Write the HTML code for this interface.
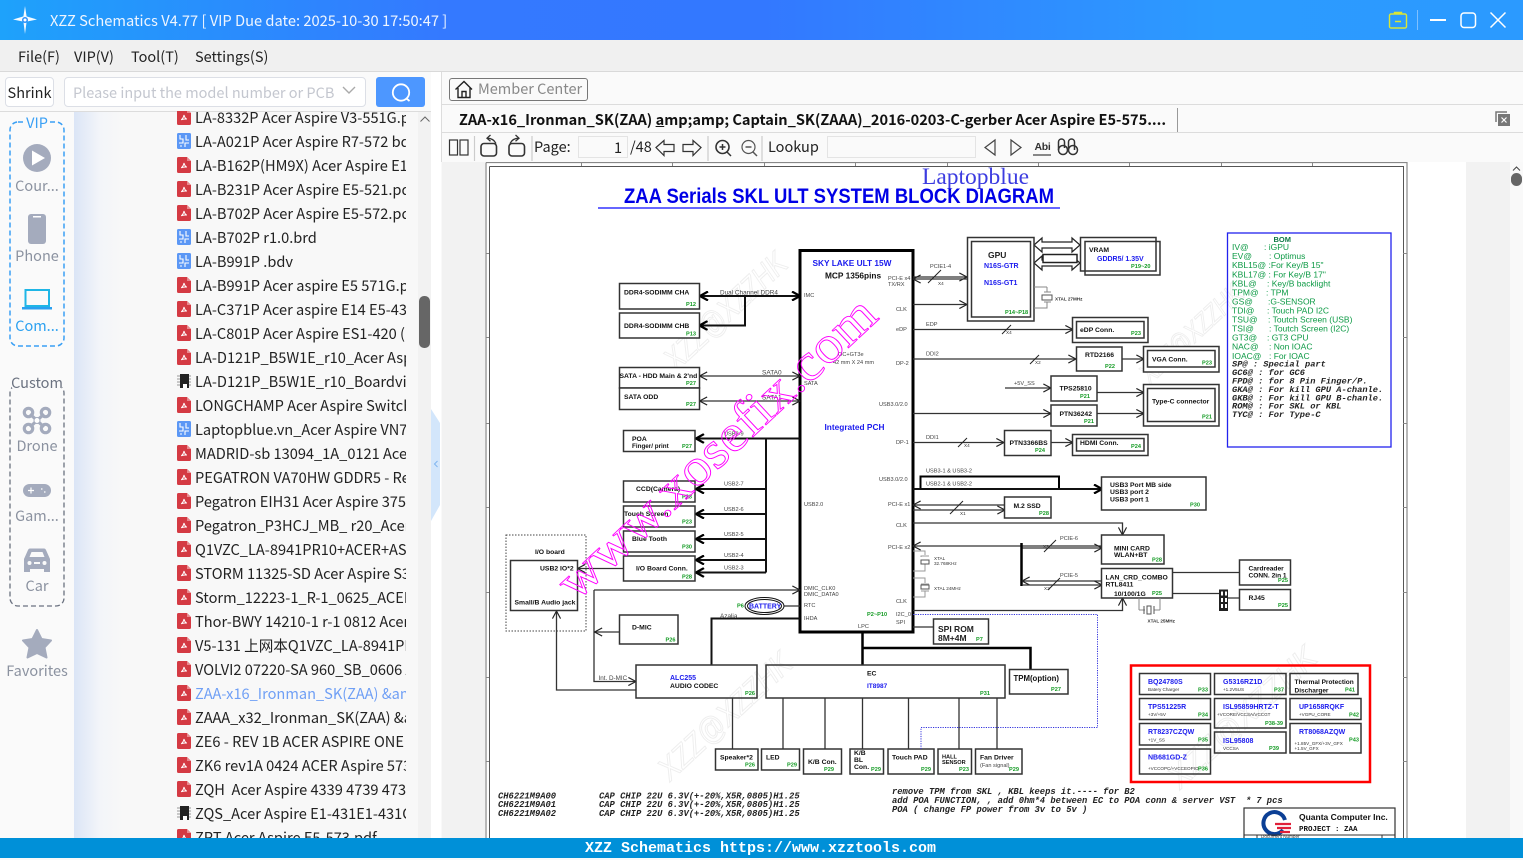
<!DOCTYPE html>
<html><head><meta charset="utf-8"><style>
*{box-sizing:border-box}
html,body{margin:0;padding:0;width:1523px;height:858px;overflow:hidden;background:#f9f9f9;font-family:"Noto Sans CJK SC","Liberation Sans",sans-serif}
.a{position:absolute}
.ui{white-space:nowrap;line-height:20px}
#list{position:absolute;left:177px;top:111px;width:229px;height:727px;overflow:hidden}
#list div{position:absolute;left:18px;width:211px;height:24px;line-height:26px;font-size:14.6px;color:#222;white-space:nowrap;overflow:hidden}
#list svg{position:absolute;left:0;width:14px;height:16px}
.side{position:absolute;left:0;width:74px;text-align:center;font-size:14.5px;color:#8b92a0;line-height:20px;white-space:nowrap}
text{font-family:"Liberation Sans",sans-serif}
.bx{fill:none;stroke:#333;stroke-width:1.5}
.wb{fill:#fff;stroke:#333;stroke-width:1.5}
.l1{stroke:#333;stroke-width:1.3;fill:none}
.l2{stroke:#111;stroke-width:2;fill:none}
.l3{stroke:#000;stroke-width:3;fill:none}
.t{font-weight:bold;font-size:6.8px;fill:#111}
.n{font-size:5.6px;fill:#444}
.g{font-weight:bold;font-size:5.6px;fill:#129a22}
.bl{font-weight:bold;font-size:7px;fill:#1a1aee}
.m{font-family:"Liberation Mono",monospace;font-style:italic;font-weight:bold;font-size:8.8px;fill:#222;white-space:pre}
.bom{font-size:8.5px;fill:#0d9a45}
.bm{font-family:"Liberation Mono",monospace;font-style:italic;font-weight:bold;font-size:8.7px;fill:#222;white-space:pre}
.wm{font-style:italic;fill:#fff;stroke:#eee;stroke-width:1}
.sm{font-size:4.6px;fill:#333}
</style></head><body>
<!-- title bar -->
<div class="a" style="left:0;top:0;width:1523px;height:40px;background:linear-gradient(90deg,#1ea2fb 0,#3479ff 29%,#3378ff 50%,#2c9bff 80%,#2b9aff 100%)"></div>
<svg class="a" style="left:12px;top:5px" width="28" height="30" viewBox="0 0 28 30"><path d="M13 1l1.600 10.400L25 14.500 14.600 16.600 13 29l-1.600-12.400L1 14.500l10.400-3.100z" fill="#fff" opacity=".95"/><circle cx="13" cy="15" r="3" fill="#2a90fb"/><circle cx="13" cy="15" r="1.500" fill="#fff"/></svg>
<div class="a ui" style="left:50px;top:11px;color:#eef5ff;font-size:14.68px">XZZ Schematics V4.77 [ VIP Due date: 2025-10-30 17:50:47 ]</div>
<svg class="a" style="left:1385px;top:8px" width="130" height="24" fill="none"><path d="M6 6h14a1.500 1.500 0 0 1 1.500 1.500V18.500A1.500 1.500 0 0 1 20 20H6a1.500 1.500 0 0 1-1.500-1.500V7.500A1.500 1.500 0 0 1 6 6zM9.500 6V4.500h7V6M10 13.500h6" stroke="#d9e537" stroke-width="1.400"/><path d="M32.500 2v20" stroke="#7fc0ff"/><path d="M45 12h16" stroke="#fff" stroke-width="2"/><rect x="76" y="5" width="14.500" height="14.500" rx="3" stroke="#fff" stroke-width="1.500"/><path d="M105.500 4.500l15 15M120.500 4.500l-15 15" stroke="#fff" stroke-width="1.500"/></svg>
<!-- menu -->
<div class="a" style="left:0;top:40px;width:1523px;height:32px;background:#f0f0f0;border-bottom:1px solid #d9d9d9"></div>
<div class="a ui" style="left:18px;top:47px;font-size:14.5px;color:#222">File(F)</div>
<div class="a ui" style="left:74px;top:47px;font-size:14.5px;color:#222">VIP(V)</div>
<div class="a ui" style="left:131px;top:47px;font-size:14.5px;color:#222">Tool(T)</div>
<div class="a ui" style="left:195px;top:47px;font-size:14.5px;color:#222">Settings(S)</div>
<!-- left toolbar -->
<div class="a" style="left:0;top:72px;width:431px;height:40px;background:#fafafa;border-bottom:1px solid #dcdcdc"></div>
<div class="a ui" style="left:5px;top:77px;width:49px;height:30px;border:1px solid #dcdfe6;border-radius:4px;background:#fff;font-size:14.500px;line-height:29px;text-align:center;color:#222">Shrink</div>
<div class="a ui" style="left:64px;top:77px;width:302px;height:30px;border:1px solid #dcdfe6;border-radius:4px;background:#fff;font-size:14.5px;line-height:29px;padding-left:8px;color:#c4c7cf">Please input the model number or PCB</div>
<svg class="a" style="left:341px;top:85px" width="16" height="12" fill="none"><path d="M2 2l6 6 6-6" stroke="#aaa" stroke-width="1.400"/></svg>
<div class="a" style="left:376px;top:77px;width:49px;height:30px;background:#4d97ff;border-radius:3px"></div>
<svg class="a" style="left:389px;top:81px" width="24" height="24" fill="none"><circle cx="12" cy="11.500" r="8.200" stroke="#fff" stroke-width="1.800"/><path d="M17.500 17.500l3 2.500" stroke="#fff" stroke-width="1.800"/></svg>
<!-- sidebar & list bg -->
<div class="a" style="left:0;top:112px;width:74px;height:726px;background:#fafafa"></div>
<div class="a" style="left:74px;top:112px;width:344px;height:726px;background:linear-gradient(90deg,#dbe5f6 0,#f3f5f9 26px,#f8f8f8 50px)"></div>
<div class="a" style="left:418px;top:112px;width:13px;height:726px;background:#f2f2f2"></div>
<svg class="a" style="left:419px;top:114px" width="12" height="12" fill="none"><path d="M1.500 7.500L6 3l4.500 4.500" stroke="#666" stroke-width="1"/></svg>
<div class="a" style="left:419px;top:296px;width:11px;height:52px;background:#666;border-radius:5px"></div>
<div class="a" style="left:431px;top:72px;width:10px;height:766px;background:#fff"></div>
<svg class="a" style="left:431px;top:405px" width="10" height="120"><path d="M0 4L9 18V100L0 116Z" fill="#d3e6fb"/><path d="M6.500 56L3.500 59l3 3" fill="none" stroke="#7fb5ef"/></svg>
<!-- sidebar content -->
<svg class="a" style="left:0;top:112px" width="74" height="726" fill="none">
<rect x="10" y="10" width="54" height="224" rx="8" stroke="#3aa0f5" stroke-width="1.500" stroke-dasharray="5 3"/>
<rect x="26" y="2" width="24" height="16" fill="#fafafa"/>
<rect x="10" y="273" width="54" height="221" rx="8" stroke="#6b7280" stroke-width="1.300" stroke-dasharray="5 3"/>
<rect x="12" y="262" width="50" height="14" fill="#fafafa"/>
<circle cx="37" cy="46" r="14" fill="#a4abbd"/><path d="M32 38.500L45 46l-13 7.500z" fill="#fff"/>
<rect x="28" y="102" width="18" height="30" rx="3" fill="#a4abbd"/><rect x="33" y="104" width="8" height="1.500" fill="#fff"/>
<path d="M25.500 178h23.500v16h-23.500z" stroke="#1fb6e6" stroke-width="2"/><path d="M22.500 195.500h29v1.500h-29z" fill="#2aa0f0" stroke="#2aa0f0"/>
<g stroke="#a4abbd" stroke-width="3.200"><path d="M30 302l14 13M44 302l-14 13"/><circle cx="28.500" cy="300.500" r="4.200"/><circle cx="45.500" cy="300.500" r="4.200"/><circle cx="28.500" cy="316.500" r="4.200"/><circle cx="45.500" cy="316.500" r="4.200"/></g><circle cx="37" cy="308.500" r="3" fill="#fff" stroke="#a4abbd"/>
<rect x="23" y="372" width="28" height="13" rx="6.500" fill="#a4abbd"/><path d="M28 378.500h6M31 375.500v6M41 377h1.500M44 380h1.500" stroke="#fff" stroke-width="1.200"/>
<g transform="translate(0,13)"><path d="M24 447v-13l4-9c.500-1 1-1.500 2-1.500h14c1 0 1.500.500 2 1.500l4 9v13h-6v-3H30v3z" fill="#a4abbd"/><path d="M29.500 432l2-5h11l2 5z" fill="#fafafa"/><circle cx="29.500" cy="438" r="2" fill="#fafafa"/><circle cx="44.500" cy="438" r="2" fill="#fafafa"/><rect x="34" y="437" width="6" height="2" fill="#fafafa"/></g>
<path d="M37 518l4.500 9 9.500 1.500-6.500 7 2 10-9.500-4.500-9.500 4.500 2-10-6.500-7 9.500-1.500z" fill="#a4abbd" stroke="#a4abbd" stroke-linejoin="round" stroke-width="2"/>
</svg>
<div class="side" style="top:113px;color:#3aa0f5">VIP</div>
<div class="side" style="top:176px">Cour...</div>
<div class="side" style="top:246px">Phone</div>
<div class="side" style="top:316px;color:#2aa0f0">Com...</div>
<div class="side" style="top:373px;color:#6b7280">Custom</div>
<div class="side" style="top:436px">Drone</div>
<div class="side" style="top:506px">Gam...</div>
<div class="side" style="top:576px">Car</div>
<div class="side" style="top:661px">Favorites</div>
<!-- file list -->
<svg width="0" height="0" class="a"><defs>
<symbol id="p" viewBox="0 0 14 16"><path d="M1.500 0h8.500l4 4v10.500a1.500 1.500 0 0 1-1.500 1.500h-11a1.500 1.500 0 0 1-1.500-1.500V1.500a1.500 1.500 0 0 1 1.500-1.500z" fill="#d43a43"/><path d="M10 0l4 4h-4z" fill="#e98a8f"/><path d="M7 6c-.300 1.800-1.300 3.700-2.800 4.800 2-1 3.700-1 5.600-.7-1.600-.6-2.400-2.200-2.800-4.100z" fill="none" stroke="#fff" stroke-width="1"/></symbol>
<symbol id="b" viewBox="0 0 14 16"><rect width="14" height="16" rx="1.500" fill="#5b97f5"/><path d="M3 2v4h3v4H2M8 14v-4h4M9 2v5h3M3 13h2" fill="none" stroke="#fff" stroke-width="1.100"/></symbol>
<symbol id="c" viewBox="0 0 14 16"><rect x="3" y="1" width="9" height="14" fill="#222"/><path d="M0 3h3M0 6h3M0 9h3M0 12h3M12 3h3M12 6h3M12 9h3M12 12h3" stroke="#999"/><path d="M6 15v-4h4v4" fill="#fff"/></symbol>
</defs></svg>
<div id="list">
<svg style="top:-2px"><use href="#p"/></svg><div style="top:-6px">LA-8332P Acer Aspire V3-551G.pdf</div>
<svg style="top:22px"><use href="#b"/></svg><div style="top:18px">LA-A021P Acer Aspire R7-572 bdv</div>
<svg style="top:46px"><use href="#p"/></svg><div style="top:42px">LA-B162P(HM9X) Acer Aspire E1-572</div>
<svg style="top:70px"><use href="#p"/></svg><div style="top:66px">LA-B231P Acer Aspire E5-521.pdf</div>
<svg style="top:94px"><use href="#p"/></svg><div style="top:90px">LA-B702P Acer Aspire E5-572.pdf</div>
<svg style="top:118px"><use href="#b"/></svg><div style="top:114px">LA-B702P r1.0.brd</div>
<svg style="top:142px"><use href="#b"/></svg><div style="top:138px">LA-B991P .bdv</div>
<svg style="top:166px"><use href="#p"/></svg><div style="top:162px">LA-B991P Acer aspire E5 571G.pdf</div>
<svg style="top:190px"><use href="#p"/></svg><div style="top:186px">LA-C371P Acer aspire E14 E5-431.pdf</div>
<svg style="top:214px"><use href="#p"/></svg><div style="top:210px">LA-C801P Acer Aspire ES1-420 (pdf</div>
<svg style="top:238px"><use href="#p"/></svg><div style="top:234px">LA-D121P_B5W1E_r10_Acer Aspire</div>
<svg style="top:262px"><use href="#c"/></svg><div style="top:258px">LA-D121P_B5W1E_r10_Boardview</div>
<svg style="top:286px"><use href="#p"/></svg><div style="top:282px">LONGCHAMP Acer Aspire Switch</div>
<svg style="top:310px"><use href="#b"/></svg><div style="top:306px">Laptopblue.vn_Acer Aspire VN7</div>
<svg style="top:334px"><use href="#p"/></svg><div style="top:330px">MADRID-sb 13094_1A_0121 Acer</div>
<svg style="top:358px"><use href="#p"/></svg><div style="top:354px">PEGATRON VA70HW GDDR5 - Rev</div>
<svg style="top:382px"><use href="#p"/></svg><div style="top:378px">Pegatron EIH31 Acer Aspire 3750</div>
<svg style="top:406px"><use href="#p"/></svg><div style="top:402px">Pegatron_P3HCJ_MB_ r20_Acer</div>
<svg style="top:430px"><use href="#p"/></svg><div style="top:426px">Q1VZC_LA-8941PR10+ACER+ASPIRE</div>
<svg style="top:454px"><use href="#p"/></svg><div style="top:450px">STORM 11325-SD Acer Aspire S3</div>
<svg style="top:478px"><use href="#p"/></svg><div style="top:474px">Storm_12223-1_R-1_0625_ACER_</div>
<svg style="top:502px"><use href="#p"/></svg><div style="top:498px">Thor-BWY 14210-1 r-1 0812 Acer</div>
<svg style="top:526px"><use href="#p"/></svg><div style="top:522px">V5-131 上网本Q1VZC_LA-8941PR</div>
<svg style="top:550px"><use href="#p"/></svg><div style="top:546px">VOLVI2 07220-SA 960_SB_0606 Acer</div>
<svg style="top:574px"><use href="#p"/></svg><div style="top:570px;color:#6f9ff5">ZAA-x16_Ironman_SK(ZAA) &amp;amp;</div>
<svg style="top:598px"><use href="#p"/></svg><div style="top:594px">ZAAA_x32_Ironman_SK(ZAA) &amp;amp;</div>
<svg style="top:622px"><use href="#p"/></svg><div style="top:618px">ZE6 - REV 1B ACER ASPIRE ONE</div>
<svg style="top:646px"><use href="#p"/></svg><div style="top:642px">ZK6 rev1A 0424 ACER Aspire 5738</div>
<svg style="top:670px"><use href="#p"/></svg><div style="top:666px">ZQH&nbsp; Acer Aspire 4339 4739 4738</div>
<svg style="top:694px"><use href="#c"/></svg><div style="top:690px">ZQS_Acer Aspire E1-431E1-431G</div>
<svg style="top:718px"><use href="#p"/></svg><div style="top:714px">ZRT Acer Aspire E5-573.pdf</div>
</div>
<!-- right panel -->
<div class="a" style="left:441px;top:72px;width:1082px;height:33px;background:#fafafa;border-bottom:1px solid #dcdcdc;border-left:1px solid #ddd"></div>
<div class="a" style="left:441px;top:105px;width:1082px;height:28px;background:#fafafa;border-bottom:1px solid #dcdcdc;border-left:1px solid #ddd"></div>
<div class="a" style="left:441px;top:133px;width:1082px;height:29px;background:#fafafa;border-left:1px solid #ddd"></div>
<div class="a ui" style="left:449px;top:78px;width:139px;height:23px;border:1px solid #777;border-radius:3px;background:#fafafa;font-size:14.500px;line-height:19px;padding-left:28px;color:#888">Member Center</div>
<svg class="a" style="left:454px;top:80px" width="20" height="19" fill="none" stroke="#222" stroke-width="1.400"><path d="M1.500 9.500L10 1.500l8 8M4 8v9.500h12V8M8 17.500v-6h4v6"/></svg>
<div class="a ui" style="left:459px;top:109px;font-size:14.560px;font-weight:bold;color:#111;line-height:21px">ZAA-x16_Ironman_SK(ZAA) <u>a</u>mp;amp; Captain_SK(ZAAA)_2016-0203-C-gerber Acer Aspire E5-575....</div>
<div class="a" style="left:1177px;top:108px;width:1px;height:24px;background:#999"></div>
<svg class="a" style="left:1493px;top:108px" width="20" height="20" fill="none"><path d="M3 14V4h11" stroke="#777" stroke-width="1.500"/><rect x="5" y="6" width="12" height="12" fill="#777"/><path d="M8.500 9.500l5 5M13.500 9.500l-5 5" stroke="#fff" stroke-width="1.200"/></svg>
<!-- tool row -->
<svg class="a" style="left:441px;top:133px" width="650" height="29" fill="none" stroke="#333" stroke-width="1.200">
<rect x="8.500" y="7" width="8" height="15"/><rect x="19" y="7" width="8" height="15"/>
<path d="M33.500 3v25" stroke="#ccc"/>
<rect x="40" y="10.500" width="15.500" height="12.500" rx="3" stroke-width="1.600"/><path d="M55 10.500C53 6.500 50 5.200 46 5.200M49.500 2l-3.500 3.200 3.500 3" stroke-width="1.300"/>
<rect x="68" y="10.500" width="15.500" height="12.500" rx="3" stroke-width="1.600"/><path d="M69 10.500C71 6.500 74 5.200 78 5.200M74.500 2l3.500 3.200-3.500 3" stroke-width="1.300"/>
<path d="M91 3v25" stroke="#ccc"/>
<path d="M215 14.500l8-7v4h10v7h-10v4zM260 14.500l-8-7v4h-10v7h10v4z" stroke-width="1.200"/>
<path d="M267 3v25" stroke="#ccc"/>
<circle cx="281.500" cy="14" r="6.500" stroke-width="1.600"/><path d="M278.500 14h6M281.500 11v6M286 19l4 4" stroke-width="1.500"/>
<circle cx="307.500" cy="14" r="6.500" stroke="#555"/><path d="M304.500 14h6M312 19l4 4" stroke="#555" stroke-width="1.500"/>
<path d="M321 3v25" stroke="#ccc"/>
<path d="M554 7l-10 7.500 10 7.500zM570 7l10 7.500-10 7.500z" stroke="#444"/>
<path d="M592 22h18" stroke="#444"/>
<circle cx="622" cy="17" r="4.500" stroke-width="1.500"/><circle cx="632" cy="17" r="4.500" stroke-width="1.500"/><path d="M617.500 17V9c0-2 1.500-3 3-3s3 1 3 3v6M627.500 15V9c0-2 1.500-3 3-3s3 1 3 3v8" stroke-width="1.500"/>
</svg>
<div class="a ui" style="left:534px;top:137px;font-size:14.500px;color:#222">Page:</div>
<div class="a ui" style="left:578px;top:136px;width:50px;height:22px;border:1px solid #e4e4e4;background:#fafafa;text-align:right;padding-right:5px;font-size:14.500px;line-height:21px;color:#222">1</div>
<div class="a ui" style="left:630px;top:137px;font-size:14.500px;color:#222">/48</div>
<div class="a ui" style="left:768px;top:137px;font-size:14.500px;color:#222">Lookup</div>
<div class="a" style="left:827px;top:136px;width:149px;height:22px;border:1px solid #e4e4e4;background:#fafafa"></div>
<div class="a" style="left:1033px;top:141px;width:19px;font-family:'Liberation Sans',sans-serif;font-size:10.500px;font-weight:bold;color:#333;line-height:12px;white-space:nowrap;letter-spacing:-.3px;text-align:center">Abi</div>
<!-- document area -->
<div class="a" style="left:442px;top:162px;width:1068px;height:676px;background:#f2f2f2"></div>
<div class="a" style="left:1510px;top:162px;width:13px;height:676px;background:#f9f9f9"></div>
<svg class="a" style="left:1510px;top:162px" width="13" height="28"><path d="M3 8.500L6.500 5 10 8.500" fill="none" stroke="#444"/><rect x="1" y="11" width="11" height="13" rx="5.500" fill="#666"/></svg>
<svg class="a" style="left:485px;top:162px;filter:blur(.3px)" width="981" height="676" viewBox="485 162 981 676">
<defs>
<marker id="o" viewBox="0 0 10 10" refX="9.500" refY="5" markerUnits="userSpaceOnUse" markerWidth="9" markerHeight="9" orient="auto-start-reverse"><path d="M1 .5L9.500 5 1 9.500" fill="none" stroke="#222" stroke-width="1.300"/></marker>
<marker id="k" viewBox="0 0 10 10" refX="9" refY="5" markerUnits="userSpaceOnUse" markerWidth="10" markerHeight="10" orient="auto-start-reverse"><path d="M1 .5L9 5 1 9.500" fill="none" stroke="#000" stroke-width="2.200"/></marker>
</defs>
<rect x="485" y="162" width="981" height="676" fill="#fff"/>
<path d="M486 162.500H1407V838M486 162.500V838" fill="none" stroke="#888" stroke-width="1.200"/>
<path d="M489.500 166.500H1403.500V838M489.500 166.500V838" fill="none" stroke="#555" stroke-width="1"/>
<path d="M581.500 162v4M672.500 162v4M764.500 162v4M855.500 162v4M947.500 162v4M1038.500 162v4M1129.500 162v4M1221.500 162v4M1312.500 162v4M1403 253.500h4M1403 337.500h4M1403 423.500h4M1403 507.500h4M1403 592.500h4M1403 677.500h4M1403 761.500h4M486 253.500h3M486 337.500h3M486 423.500h3M486 507.500h3M486 592.500h3M486 677.500h3M486 761.500h3" stroke="#888"/>
<!-- grey watermarks -->
<g class="wm"><text transform="translate(676,372) rotate(-43)" textLength="155" lengthAdjust="spacingAndGlyphs" style="font-size:32px" fill="#fff" stroke="#eee">XZZ@XZZHK</text>
<text transform="translate(670,782) rotate(-43)" textLength="170" lengthAdjust="spacingAndGlyphs" style="font-size:32px">XZZ@XZZHK</text>
<text transform="translate(1150,385) rotate(-43)" textLength="130" lengthAdjust="spacingAndGlyphs" style="font-size:28px">XZZ@XZZHK</text>
<text transform="translate(1180,790) rotate(-43)" textLength="190" lengthAdjust="spacingAndGlyphs" style="font-size:32px">XZZ@XZZHK</text>
</g>
<!-- title -->
<text x="922" y="184" style="font-family:'Liberation Serif',serif;font-size:23px;fill:#3c3ce0" textLength="107" lengthAdjust="spacingAndGlyphs">Laptopblue</text>
<text x="624" y="203" style="font-weight:bold;font-size:21px;fill:#0000e6" textLength="430" lengthAdjust="spacingAndGlyphs">ZAA Serials SKL ULT SYSTEM BLOCK DIAGRAM</text>
<path d="M598 208h462" stroke="#3333ff" stroke-width="1.500"/>
<!-- chip -->
<rect x="800" y="250.500" width="113" height="381.500" fill="none" stroke="#000" stroke-width="3"/>
<!-- left lines -->
<path class="l2" d="M700 296H800" marker-start="url(#k)" marker-end="url(#k)"/>
<path class="l2" d="M745 296V325.500H699.500" marker-end="url(#k)"/>
<path class="l1" d="M699.500 376H800" marker-start="url(#o)" marker-end="url(#o)"/>
<path class="l1" d="M699.500 401H800" stroke-width="1.800" marker-start="url(#o)" marker-end="url(#o)"/>
<path class="l2" d="M800 438.500H696" marker-end="url(#k)"/>
<path class="l2" d="M766 438.500V572.500"/>
<path class="l2" d="M766 489H696" marker-end="url(#k)"/>
<path class="l2" d="M766 514H696" marker-end="url(#k)"/>
<path class="l2" d="M766 539H696" marker-end="url(#k)"/>
<path class="l2" d="M766 560H696" marker-end="url(#k)"/>
<path class="l2" d="M766 572.500H696" marker-end="url(#k)"/>
<path class="l1" d="M623 568.500H577.500" marker-end="url(#o)"/>
<path class="l1" d="M594 590H800" marker-end="url(#o)"/>
<path class="l1" d="M594 590V681.500H636" marker-end="url(#o)"/>
<path class="l1" d="M619 632H594.500" marker-end="url(#o)"/>
<path class="l1" d="M636 690H556.500V611" marker-end="url(#o)"/>
<path d="M711.500 665V618.500H800" fill="none" stroke="#111" stroke-width="2"/>
<path class="l1" d="M783 606H800"/>
<path d="M862.500 632V665M862.500 648H1030.500V669" fill="none" stroke="#000" stroke-width="2.500"/>
<path class="l1" d="M732.500 698V749M783 698V749M825 698V749M862.500 698V749M908.500 698V749M959 698V749M997 698V749"/>
<!-- left boxes -->
<rect class="wb" x="619.500" y="283.500" width="80" height="25.500"/><rect class="wb" x="619.500" y="313" width="80" height="25"/>
<rect class="wb" x="619.500" y="367.500" width="80" height="20.500"/><rect class="wb" x="619.500" y="388" width="80" height="21.500"/>
<rect class="wb" x="623.500" y="430.500" width="71.500" height="21"/><rect class="wb" x="623.500" y="481" width="71.500" height="21"/><rect class="wb" x="623.500" y="506" width="71.500" height="21"/><rect class="wb" x="623.500" y="531" width="71.500" height="21"/><rect class="wb" x="623.500" y="556" width="71.500" height="25"/>
<rect x="506" y="535" width="80" height="96" fill="none" stroke="#444" stroke-dasharray="1.500 1.500"/>
<rect class="bx" x="510.500" y="560.500" width="67" height="50"/>
<rect class="wb" x="619.500" y="615" width="58.500" height="29"/>
<rect class="bx" x="636" y="665" width="121" height="33"/><rect class="bx" x="766" y="665" width="239" height="33"/><rect class="wb" x="1009.500" y="669.500" width="58.500" height="24.500"/>
<rect class="wb" x="715.500" y="749" width="42.500" height="21"/><rect class="wb" x="761.500" y="749" width="38" height="21"/><rect class="wb" x="803.500" y="749" width="38" height="25"/><rect class="wb" x="850" y="749" width="33.500" height="25"/><rect class="wb" x="888" y="749" width="46" height="25"/><rect class="wb" x="938" y="749" width="33.500" height="25"/><rect class="wb" x="975.500" y="749" width="46.500" height="25"/>
<ellipse cx="764.500" cy="606" rx="19.500" ry="8.500" fill="#fff" stroke="#111"/><ellipse cx="764.500" cy="606" rx="17" ry="6.500" fill="none" stroke="#111"/>
<!-- right lines -->
<path class="l1" d="M913 277H967" marker-end="url(#o)"/><path class="l1" d="M967 279H913" marker-end="url(#o)"/>
<path class="l1" d="M913 304.500H967" marker-end="url(#o)"/>
<path class="l1" d="M913 329.500H1073" marker-end="url(#o)"/>
<path class="l1" d="M913 359H1076" marker-end="url(#o)"/>
<path class="l1" d="M1122 359H1144" marker-end="url(#o)"/>
<path class="l1" d="M1005 388H1051" marker-end="url(#o)"/>
<path class="l1" d="M1097 392.500H1144" marker-end="url(#o)"/>
<path class="l1" d="M913 413.500H1051" marker-end="url(#o)"/>
<path class="l1" d="M1097 413.500H1144" marker-end="url(#o)"/>
<path class="l1" d="M913 442.500H1004" marker-end="url(#o)"/>
<path class="l1" d="M1051 442.500H1073" marker-end="url(#o)"/>
<path d="M920.500 489V476.500H1059V489" fill="none" stroke="#000" stroke-width="2"/>
<path class="l2" d="M913 489H1102" marker-end="url(#k)"/>
<path class="l1" d="M1005 505H913" marker-end="url(#o)"/><path class="l1" d="M913 510H1005" marker-end="url(#o)"/>
<path class="l1" d="M913 523H1122.500V535" marker-end="url(#o)"/>
<path class="l1" d="M1102 546H913" marker-end="url(#o)"/><path class="l1" d="M1021 548H1102" marker-end="url(#o)"/>
<path d="M1021.500 543V586" stroke="#000" stroke-width="2.500"/>
<path class="l1" d="M1102 581H1022" marker-end="url(#o)"/><path class="l1" d="M1022 585H1102" marker-end="url(#o)"/>
<path class="l1" d="M1172 572.500H1239M1172 593.500H1219M1228 598H1239"/>
<path class="l1" d="M913 610.500H1122.500V598" marker-end="url(#o)"/>
<path d="M913 614.500H1097.500V727.500H921V749" fill="none" stroke="#3333dd" stroke-dasharray="1.200 1.200"/>
<path class="l1" d="M913 627H933"/>
<path d="M1034 245l8-7v4h30v-4l8 7-8 7v-4h-30v4zM1034 263l8-7v4h30v-4l8 7-8 7v-4h-30v4z" fill="#fff" stroke="#222" stroke-width="1.200"/>
<rect x="1043" y="254.500" width="34" height="8" fill="#fff" stroke="#222" stroke-width="1.500"/>
<!-- right boxes -->
<rect class="wb" x="967.500" y="237.500" width="66.500" height="83.500"/><rect class="bx" x="971.500" y="241.500" width="59" height="75.500"/>
<rect class="bx" x="1080.500" y="237.500" width="75.500" height="33.500"/><rect class="bx" x="1085" y="241.500" width="75" height="33.500"/>
<rect class="wb" x="1072.500" y="317.500" width="75.500" height="25"/><rect class="bx" x="1076.500" y="321.500" width="67.500" height="16.500"/>
<rect class="wb" x="1076.500" y="347" width="45.500" height="24"/>
<rect class="wb" x="1143.500" y="346.500" width="75.500" height="25.500"/><rect class="bx" x="1147.500" y="350.500" width="67.500" height="16.500"/>
<rect class="wb" x="1051" y="376" width="46" height="25"/><rect class="wb" x="1051" y="405" width="46" height="21"/>
<rect class="wb" x="1143.500" y="384.500" width="75.500" height="41.500"/><rect class="bx" x="1147.500" y="388.500" width="67.500" height="33"/>
<rect class="wb" x="1004.500" y="430.500" width="46.500" height="25"/>
<rect class="wb" x="1072.500" y="434.500" width="75.500" height="21"/><rect class="bx" x="1076.500" y="438.500" width="67.500" height="12.500"/>
<rect class="wb" x="1101.500" y="477" width="104.500" height="33"/>
<rect class="wb" x="1004.500" y="497" width="46.500" height="21"/>
<rect class="wb" x="1101.500" y="535" width="62.500" height="29"/><rect class="wb" x="1101.500" y="568.500" width="71" height="29.500"/>
<rect class="wb" x="1239.500" y="560" width="51" height="25"/><rect class="wb" x="1239.500" y="589.500" width="51" height="20.500"/>
<rect x="1219" y="589.500" width="9" height="21.500" fill="#222"/><path d="M1221 591.500h2v4h-2zM1225 591.500h2v4h-2zM1221 598h2v4h-2zM1225 598h2v4h-2zM1221 604h2v4h-2zM1225 604h2v4h-2z" fill="#fff"/>
<rect class="wb" x="933.500" y="619" width="55" height="25"/>
<!-- xtal -->
<path d="M1034 287h13M1047 287v5M1047 302v6h-13M1044 292h7M1044 302h7" fill="none" stroke="#888"/><rect x="1042" y="295" width="10" height="5" fill="none" stroke="#555"/>
<path d="M913 551h12v4M921 557v-1h8M921 564h8M925 564v7h-12M913 578h12v5M921 584h8M921 591h8M925 591v6h-12" fill="none" stroke="#999"/><rect x="921" y="560" width="8" height="4" fill="none" stroke="#555"/><rect x="921" y="585" width="8" height="4" fill="none" stroke="#555"/>
<path d="M1139 598v12M1160 598v12M1139 610h6M1154 610h6" stroke="#888" fill="none"/><rect x="1147" y="606" width="4" height="8" fill="none" stroke="#555"/><path d="M1144 606v8M1154 606v8" stroke="#555"/>
<!-- slashes -->
<path d="M928 283l13-13M1002 334l9-9M1030 364l9-9M958 447l9-9M950 514l13-13M1044 552l12-12M1048 590l12-12" stroke="#222" fill="none"/>
<!-- left text -->
<text class="t" x="624" y="294.500">DDR4-SODIMM CHA</text><text class="g" x="686" y="306">P12</text>
<text class="t" x="624" y="328">DDR4-SODIMM CHB</text><text class="g" x="686" y="335.500">P13</text>
<text class="t" x="619.500" y="378">SATA - HDD Main &amp; 2'nd</text><text class="g" x="686" y="385">P27</text>
<text class="t" x="624" y="399">SATA ODD</text><text class="g" x="686" y="406">P27</text>
<text class="t" x="632" y="441">POA</text><text class="t" x="632" y="448" style="font-size:6.300px">Finger/ print</text><text class="g" x="682" y="448">P27</text>
<text class="t" x="636" y="491">CCD(Camera)</text><text class="g" x="682" y="498.500">P23</text>
<text class="t" x="624" y="516">Touch Screen</text><text class="g" x="682" y="523.500">P23</text>
<text class="t" x="632" y="541">Blue Tooth</text><text class="g" x="682" y="548.500">P30</text>
<text class="t" x="636" y="570.500">I/O Board Conn.</text><text class="g" x="682" y="578.500">P28</text>
<text class="t" x="535" y="554">I/O board</text><text class="t" x="540" y="570.500">USB2 IO*2</text><text class="t" x="514.500" y="604.500">Small/B Audio jack</text>
<text class="t" x="632" y="629.500">D-MIC</text><text class="g" x="665.500" y="641.500">P26</text>
<text class="n" x="720" y="294.500" style="font-size:6.400px">Dual Channel DDR4</text>
<text class="n" x="762" y="374.500" style="font-size:6.500px">SATA0</text><text class="n" x="762" y="399.500" style="font-size:6.500px">SATA1</text>
<text class="n" x="724" y="435.500">USB2-9</text><text class="n" x="724" y="485.500">USB2-7</text><text class="n" x="724" y="511">USB2-6</text><text class="n" x="724" y="536">USB2-5</text><text class="n" x="724" y="557">USB2-4</text><text class="n" x="724" y="569.500">USB2-3</text>
<text class="n" x="720" y="618" style="font-size:6.400px">Azalia</text><text class="n" x="598.500" y="680" style="font-size:6.300px">Int. D-MIC</text>
<text class="n" x="804" y="297">IMC</text><text class="n" x="804" y="385">SATA</text><text class="n" x="804" y="506">USB2.0</text><text class="n" x="804" y="590">DMIC_CLK0</text><text class="n" x="804" y="596">DMIC_DATA0</text><text class="n" x="804" y="607">RTC</text><text class="n" x="804" y="620">IHDA</text>
<text class="n" x="858" y="628">LPC</text><text class="g" x="867" y="616">P2~P10</text><text class="g" x="737" y="607.500">P6</text>
<text x="749" y="608.500" style="font-weight:bold;font-size:7px;fill:#2222ee">BATTERY</text>
<text class="bl" x="670" y="680">ALC255</text><text class="t" x="670" y="688">AUDIO CODEC</text><text class="g" x="745" y="695">P26</text>
<text class="t" x="867" y="675.500">EC</text><text class="bl" x="867" y="688" style="font-size:6.500px">IT8987</text><text class="g" x="980" y="695">P31</text>
<text class="t" x="1013.500" y="681" style="font-size:7.800px">TPM(option)</text><text class="g" x="1051" y="691">P27</text>
<text class="t" x="720" y="759.500">Speaker*2</text><text class="g" x="745" y="766.500">P26</text>
<text class="t" x="766" y="759.500">LED</text><text class="g" x="787" y="766.500">P29</text>
<text class="t" x="808" y="764">K/B Con.</text><text class="g" x="824" y="771">P29</text>
<text class="t" x="854" y="755">K/B</text><text class="t" x="854" y="762">BL</text><text class="t" x="854" y="769">Con.</text><text class="g" x="871" y="771">P29</text>
<text class="t" x="892" y="759.500">Touch PAD</text><text class="g" x="921" y="771">P29</text>
<text class="t" x="942" y="758.500" style="font-size:5.600px">HALL</text><text class="t" x="942" y="764" style="font-size:5.600px">SENSOR</text><text class="g" x="959" y="771">P23</text>
<text class="t" x="980" y="759.500">Fan Driver</text><text class="n" x="980" y="767">(Fan signal)</text><text class="g" x="1009" y="771">P29</text>
<!-- chip text -->
<text class="bl" x="812.500" y="266" style="font-size:8.300px">SKY LAKE ULT 15W</text>
<text class="t" x="825" y="278.500" style="font-size:8.300px">MCP 1356pins</text>
<text class="bl" x="824.500" y="430" style="font-size:8.300px">Integrated  PCH</text>
<text class="n" x="838" y="356">OC+GT3e</text><text class="n" x="833" y="364">42 mm X 24 mm</text>
<text class="n" x="888" y="280">PCI-E x4</text><text class="n" x="888" y="286">TX/RX</text>
<text class="n" x="896" y="311">CLK</text><text class="n" x="896" y="331">eDP</text><text class="n" x="896" y="365">DP-2</text><text class="n" x="879" y="406">USB3.0/2.0</text><text class="n" x="896" y="444">DP-1</text><text class="n" x="879" y="481">USB3.0/2.0</text><text class="n" x="888" y="506">PCI-E x1</text><text class="n" x="896" y="527">CLK</text><text class="n" x="888" y="549">PCI-E x2</text><text class="n" x="896" y="603">CLK</text><text class="n" x="896" y="616">I2C_0</text><text class="n" x="896" y="624">SPI</text>
<!-- right text -->
<text class="n" x="930" y="268">PCIE1-4</text><text class="sm" x="938" y="285">X4</text>
<text class="n" x="926" y="326">EDP</text><text class="sm" x="1006" y="334">X4</text>
<text class="n" x="926" y="355.500">DDI2</text><text class="sm" x="1035" y="364">X2</text>
<text class="n" x="1014" y="385">+5V_SS</text>
<text class="n" x="926" y="439">DDI1</text><text class="sm" x="964" y="447">X4</text>
<text class="n" x="926" y="472.500">USB3-1 &amp; USB3-2</text><text class="n" x="926" y="485.500">USB2-1 &amp; USB2-2</text>
<text class="sm" x="960" y="515">X1</text>
<text x="988" y="258" style="font-weight:bold;font-size:8.500px;fill:#222">GPU</text>
<text class="bl" x="984" y="268">N16S-GTR</text><text class="bl" x="984" y="285">N16S-GT1</text><text class="g" x="1005" y="314">P14~P18</text>
<text class="t" x="1089" y="252">VRAM</text><text class="bl" x="1097" y="261">GDDR5/ 1.35V</text><text class="g" x="1131" y="268">P19~20</text>
<text class="sm" x="1055" y="300.500" style="font-weight:bold">XTAL 27MHz</text>
<text class="t" x="1080" y="332">eDP  Conn.</text><text class="g" x="1131" y="335">P23</text>
<text class="t" x="1085" y="357">RTD2166</text><text class="g" x="1105" y="368">P22</text>
<text class="t" x="1152" y="361.500">VGA Conn.</text><text class="g" x="1202" y="364.500">P23</text>
<text class="t" x="1059.500" y="390.500">TPS25810</text><text class="g" x="1080" y="398">P21</text>
<text class="t" x="1059.500" y="416">PTN36242</text><text class="g" x="1084" y="423">P21</text>
<text class="t" x="1152" y="403.500">Type-C connector</text><text class="g" x="1202" y="418.500">P21</text>
<text class="t" x="1009.500" y="445">PTN3366BS</text><text class="g" x="1035" y="452">P24</text>
<text class="t" x="1080" y="445">HDMI Conn.</text><text class="g" x="1131" y="448">P24</text>
<text class="t" x="1110" y="487">USB3 Port MB side</text><text class="t" x="1110" y="494">USB3 port 2</text><text class="t" x="1110" y="501.500">USB3 port 1</text><text class="g" x="1190" y="506.500">P30</text>
<text class="t" x="1013.500" y="508">M.2 SSD</text><text class="g" x="1039" y="515">P28</text>
<text class="t" x="1114" y="550.500">MINI CARD</text><text class="t" x="1114" y="557">WLAN+BT</text><text class="g" x="1152" y="561.500">P28</text>
<text class="n" x="1060" y="540">PCIE-6</text><text class="n" x="1060" y="577">PCIE-5</text><text class="sm" x="1043" y="548">X2</text><text class="sm" x="1044" y="590">X2</text>
<text class="t" x="1105.500" y="579.500">LAN_CRD_COMBO</text><text class="t" x="1105.500" y="586.500">RTL8411</text><text class="t" x="1114" y="596">10/100/1G</text><text class="g" x="1152" y="595">P25</text>
<text class="t" x="1248.500" y="570.500" style="font-size:6.600px">Cardreader</text><text class="t" x="1248.500" y="577.500" style="font-size:6.600px">CONN. 2in 1</text><text class="g" x="1278" y="582">P25</text>
<text class="t" x="1248.500" y="600">RJ45</text><text class="g" x="1278" y="607">P25</text>
<text class="sm" x="1147.500" y="622.500" style="font-weight:bold">XTAL 25MHz</text>
<text class="sm" x="934" y="560">XTAL</text><text class="sm" x="934" y="565">32.768KHz</text><text class="sm" x="934" y="590">XTAL 24MHz</text>
<text x="938" y="632" style="font-weight:bold;font-size:8.500px;fill:#222">SPI ROM</text><text x="938" y="641" style="font-weight:bold;font-size:8.500px;fill:#222">8M+4M</text><text class="g" x="976" y="641">P7</text>
<!-- red box -->
<rect x="1131" y="665.500" width="239" height="116.500" fill="none" stroke="#f00" stroke-width="2.500"/>
<g class="bx"><rect x="1139.500" y="673.500" width="71" height="21"/><rect x="1139.500" y="698.500" width="71" height="21"/><rect x="1139.500" y="723.500" width="71" height="21.500"/><rect x="1139.500" y="749" width="71" height="25"/>
<rect x="1214.500" y="673.500" width="71.500" height="21"/><rect x="1214.500" y="698.500" width="71.500" height="29.500"/><rect x="1214.500" y="732" width="71.500" height="21"/>
<rect x="1290" y="673.500" width="68" height="21"/><rect x="1290" y="698.500" width="71" height="21"/><rect x="1290" y="723.500" width="71" height="29.500"/></g>
<text class="bl" x="1148" y="684">BQ24780S</text><text class="sm" x="1148" y="691">Batery Charger</text><text class="g" x="1198" y="691.500">P33</text>
<text class="bl" x="1223" y="684">G5316RZ1D</text><text class="sm" x="1223" y="691">+1.2V5US</text><text class="g" x="1274" y="691.500">P37</text>
<text class="t" x="1294.500" y="684" style="font-size:6.500px">Thermal Protection</text><text class="t" x="1294.500" y="692.500" style="font-size:6.500px">Discharger</text><text class="g" x="1345" y="691.500">P41</text>
<text class="bl" x="1148" y="709">TPS51225R</text><text class="sm" x="1148" y="716">+3V/+5V</text><text class="g" x="1198" y="716.500">P34</text>
<text class="bl" x="1223" y="709">ISL95859HRTZ-T</text><text class="sm" x="1217" y="716">+VCORE/VCCSA/VCCGT</text><text class="g" x="1265" y="725">P38-39</text>
<text class="bl" x="1299" y="709">UP1658RQKF</text><text class="sm" x="1299" y="716">+VGPU_CORE</text><text class="g" x="1349" y="716.500">P42</text>
<text class="bl" x="1148" y="734">RT8237CZQW</text><text class="sm" x="1148" y="741.500">+1V_SS</text><text class="g" x="1198" y="741.500">P35</text>
<text class="bl" x="1223" y="743">ISL95808</text><text class="sm" x="1223" y="750">VCCSA</text><text class="g" x="1269" y="750">P39</text>
<text class="bl" x="1299" y="734">RT8068AZQW</text><text class="g" x="1349" y="741.500">P43</text><text class="sm" x="1294.500" y="745">+1.85V_GFX/+3V_GFX</text><text class="sm" x="1294.500" y="750">+1.5V_GFX</text>
<text class="bl" x="1148" y="759.500">NB681GD-Z</text><text class="sm" x="1148" y="770">+VCCOPC/+VCCEOPIO</text><text class="g" x="1198" y="770.500">P36</text>
<!-- BOM -->
<rect x="1227.500" y="233" width="163.500" height="214" fill="none" stroke="#2222ee" stroke-width="1.300"/>
<text x="1273.500" y="242" style="font-weight:bold;font-size:7.500px;fill:#0d7a45">BOM</text>
<g class="bom"><text class="bom" x="1232" y="250">IV@</text><text class="bom" x="1264" y="250">: iGPU</text>
<text class="bom" x="1232" y="259">EV@</text><text class="bom" x="1269" y="259">: Optimus</text>
<text class="bom" x="1232" y="268">KBL15@ :For Key/B 15"</text>
<text class="bom" x="1232" y="277.500">KBL17@ : For Key/B 17"</text>
<text class="bom" x="1232" y="286.500">KBL@</text><text class="bom" x="1267" y="286.500">: Key/B backlight</text>
<text class="bom" x="1232" y="295.500">TPM@</text><text class="bom" x="1266" y="295.500">: TPM</text>
<text class="bom" x="1232" y="304.500">GS@</text><text class="bom" x="1268" y="304.500">:G-SENSOR</text>
<text class="bom" x="1232" y="313.500">TDI@</text><text class="bom" x="1267" y="313.500">: Touch PAD I2C</text>
<text class="bom" x="1232" y="322.500">TSU@</text><text class="bom" x="1268" y="322.500">: Toutch Screen (USB)</text>
<text class="bom" x="1232" y="331.500">TSI@</text><text class="bom" x="1269" y="331.500">: Toutch Screen (I2C)</text>
<text class="bom" x="1232" y="340.500">GT3@</text><text class="bom" x="1267" y="340.500">: GT3 CPU</text>
<text class="bom" x="1232" y="349.500">NAC@</text><text class="bom" x="1269" y="349.500">: Non IOAC</text>
<text class="bom" x="1232" y="359">IOAC@</text><text class="bom" x="1269" y="359">: For IOAC</text></g>
<text class="bm" x="1232" y="366.500">SP@ : Special part</text>
<text class="bm" x="1232" y="375">GC6@ : for GC6</text>
<text class="bm" x="1232" y="383.500">FPD@ : for 8 Pin Finger/P.</text>
<text class="bm" x="1232" y="392">GKA@ : For kill GPU A-chanle.</text>
<text class="bm" x="1232" y="400.500">GKB@ : For kill GPU B-chanle.</text>
<text class="bm" x="1232" y="408.500">ROM@ : For SKL or KBL</text>
<text class="bm" x="1232" y="417">TYC@ : For Type-C</text>
<!-- notes -->
<text class="m" x="498" y="798.500">CH6221M9A00</text><text class="m" x="498" y="807">CH6221M9A01</text><text class="m" x="498" y="816">CH6221M9A02</text>
<text class="m" x="599" y="798.500">CAP CHIP 22U 6.3V(+-20%,X5R,0805)H1.25</text><text class="m" x="599" y="807">CAP CHIP 22U 6.3V(+-20%,X5R,0805)H1.25</text><text class="m" x="599" y="816">CAP CHIP 22U 6.3V(+-20%,X5R,0805)H1.25</text>
<text class="m" x="892" y="794">remove TPM from SKL , KBL keeps it.---- for B2</text>
<text class="m" x="892" y="803">add POA FUNCTION, , add 0hm*4 between EC to POA conn &amp; server VST  * 7 pcs</text>
<text class="m" x="892" y="812">POA ( change FP power from 3v to 5v )</text>
<!-- magenta watermark -->
<text transform="translate(576,602) rotate(-43)" textLength="416" lengthAdjust="spacingAndGlyphs" style="font-family:'Liberation Serif',serif;font-size:52px;fill:none;stroke:#f0f;stroke-width:.9">www.xosefix.com</text>
<!-- quanta -->
<rect x="1244" y="808" width="151" height="40" fill="#fff" stroke="#333" stroke-width="1.200"/>
<path d="M1283 830a11 11 0 1 1 2-10" fill="none" stroke="#0b3f95" stroke-width="4"/>
<path d="M1275 824h16M1277 828h14M1280 832h10" stroke="#e0203a" stroke-width="2.200"/>
<text x="1299" y="820" style="font-weight:bold;font-size:8.500px;fill:#111">Quanta Computer Inc.</text>
<text x="1299" y="831" style="font-family:'Liberation Mono',monospace;font-weight:bold;font-size:7.500px;fill:#111">PROJECT : ZAA</text>
<path d="M1244 835h151M1257 835v5M1382 835v5" stroke="#333"/><text class="sm" x="1261" y="838">Document Number</text>
</svg>
<!-- status bar -->
<div class="a" style="left:0;top:838px;width:1523px;height:20px;background:#0090d8;color:#fff;font-family:'Liberation Mono',monospace;font-weight:bold;font-size:15px;line-height:22px;white-space:pre;padding-left:585px">XZZ Schematics https://www.xzztools.com</div>
</body></html>
